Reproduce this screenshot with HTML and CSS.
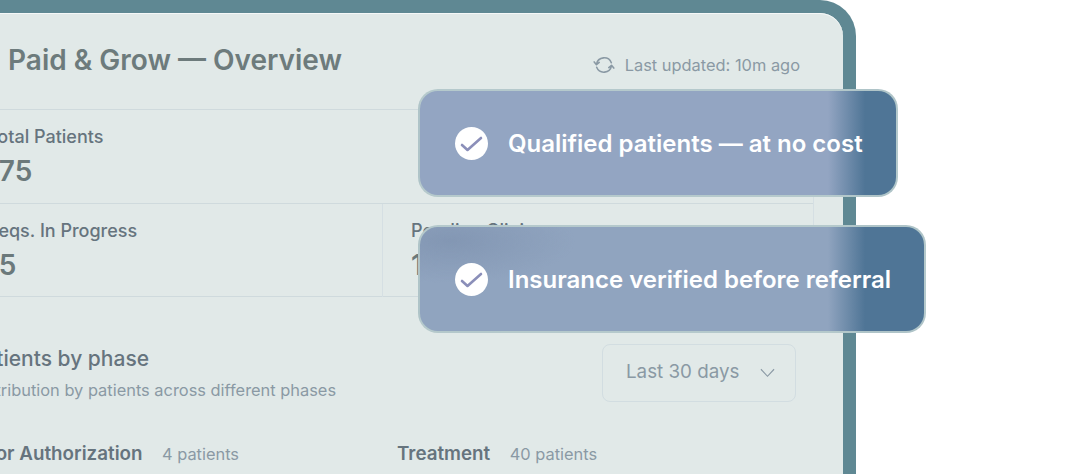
FILE: index.html
```html
<!DOCTYPE html>
<html lang="en">
<head>
    <meta charset="UTF-8">
    <meta name="viewport" content="width=device-width, initial-scale=1.0">
    <title>Paid &amp; Grow</title>
    <link rel="stylesheet" href="styles.css">
</head>
<body>
  <div class="frame">
    <div class="panel">
      <div class="header">
        <h1>Paid &amp; Grow — Overview</h1>
        <div class="updated">
          <svg class="refresh-icon" viewBox="0 0 24 24">
            <path d="M20 9.5A8.5 8.5 0 0 0 3.8 11M1.3 8.6l2.5 3 3-2.4"/>
            <path d="M4 14.5A8.5 8.5 0 0 0 20.2 13M22.7 15.4l-2.5-3-3 2.4"/>
          </svg>
          Last updated: 10m ago
        </div>
      </div>
      <div class="stats">
        <div class="stat stat-wide">
          <div class="stat-label">Total Patients</div>
          <div class="stat-value">175</div>
        </div>
        <div class="stat stat-left">
          <div class="stat-label">Reqs. In Progress</div>
          <div class="stat-value">15</div>
        </div>
        <div class="stat stat-right">
          <div class="stat-label">Pending Clinic</div>
          <div class="stat-value">1</div>
        </div>
      </div>
      <div class="phases">
        <div class="phases-text">
          <h2>Patients by phase</h2>
          <p>Distribution by patients across different phases</p>
        </div>
        <div class="select">
          <span class="select-text">Last 30 days</span>
          <svg class="chevron" viewBox="0 0 16 10"><path d="M1 1l7 7.5L15 1"/></svg>
        </div>
      </div>
      <div class="phase-list">
        <div class="phase"><strong>Prior Authorization</strong><span>4 patients</span></div>
        <div class="phase"><strong>Treatment</strong><span>40 patients</span></div>
      </div>
    </div>
  </div>

  <div class="callouts">
    <div class="callout">
      <svg class="check" viewBox="0 0 33 33"><circle cx="16.5" cy="16.5" r="16.5"/><path d="M7 18l5.5 5L26 11"/></svg>
      Qualified patients — at no cost
    </div>
    <div class="callout callout-smudged">
      <svg class="check" viewBox="0 0 33 33"><circle cx="16.5" cy="16.5" r="16.5"/><path d="M7 18l5.5 5L26 11"/></svg>
      Insurance verified before referral
    </div>
  </div>
</body>
</html>
```

FILE: styles.css
```css
html, body {
    height: 100%;
    overflow: hidden;
}
body {
    font-family: Inter, "Liberation Sans", sans-serif;
    background-color: white;
    margin: 0;
    padding: 0;
    color: #67757c;
}
.frame {
    width: 890px;
    height: 474px;
    margin-left: -34px;
    padding: 13px 13px 0;
    box-sizing: border-box;
    background-color: #5f8893;
    border-radius: 36px 36px 0 0;
}
.panel {
    height: 100%;
    background-color: #e1e9e8;
    border-radius: 23px 23px 0 0;
    box-shadow: inset 0 1px 0 #f5f8f8;
}
.header {
    height: 96px;
    display: flex;
    justify-content: space-between;
    align-items: center;
    box-sizing: border-box;
}
h1 {
    font-size: 28px;
    font-weight: 600;
    margin: 0 0 3px 29px;
    color: #6d7b7c;
    white-space: nowrap;
}
.updated {
    display: flex;
    align-items: center;
    gap: 10px;
    margin: 8px 43px 0 0;
    font-size: 16.4px;
    color: #8a99a4;
}
.refresh-icon {
    width: 22px;
    height: 22px;
    fill: none;
    stroke: #8a99a4;
    stroke-width: 1.7;
    stroke-linecap: round;
    stroke-linejoin: round;
}
.stats {
    width: 853px;
    margin-left: -18px;
    box-sizing: border-box;
    display: grid;
    grid-template-columns: 422px 1fr;
    grid-template-rows: 94px 93px;
    border-top: 1px solid #cfdadd;
    border-bottom: 1px solid #cfdadd;
    border-right: 1px solid #d5dfe3;
    height: 188px;
}
.stat {
    padding: 15px 29px 0 26px;
}
.stat-wide {
    grid-column: 1 / 3;
    border-bottom: 1px solid #cfdadd;
}
.stat-left {
    border-right: 1px solid #d5dfe3;
}
.stat-right {
    padding-left: 28px;
}
.stat-label {
    font-size: 18px;
    font-weight: 500;
    line-height: 24px;
    color: #66747e;
}
.stat-value {
    font-size: 28px;
    font-weight: 600;
    line-height: 36px;
    margin-top: 4px;
    color: #6b797b;
}
.phases {
    display: flex;
    justify-content: space-between;
    align-items: flex-start;
    width: 825px;
    margin: 47px 0 0 -8px;
}
h2 {
    font-size: 21px;
    font-weight: 500;
    line-height: 28px;
    margin: 1px 0 -1px;
    color: #66747e;
}
.phases-text p {
    font-size: 16.4px;
    line-height: 22px;
    margin: 7px 0 0;
    color: #8a99a4;
}
.select {
    width: 194px;
    height: 58px;
    box-sizing: border-box;
    padding: 0 20px 0 23px;
    display: flex;
    justify-content: space-between;
    align-items: center;
    font-size: 18.8px;
    color: #8a99a4;
    border: 1px solid #d2dde1;
    border-radius: 8px;
}
.select-text {
    margin-bottom: 3px;
}
.chevron {
    width: 15px;
    height: 10px;
    fill: none;
    stroke: #8a99a4;
    stroke-width: 1.2;
}
.phase-list {
    display: grid;
    grid-template-columns: 426px 1fr;
    margin: 40px 0 0 -8px;
}
.phase {
    display: flex;
    align-items: baseline;
    gap: 19.5px;
    white-space: nowrap;
}
.phase strong {
    font-size: 18.8px;
    font-weight: 600;
    color: #66747e;
}
.phase span {
    font-size: 16.4px;
    color: #8a99a4;
}
/* these sit over the dashboard */
.callouts {
    position: absolute;
    left: 418px;
    top: 89px;
    display: flex;
    flex-direction: column;
    align-items: flex-start;
    gap: 28px;
}
.callout {
    height: 108px;
    box-sizing: border-box;
    padding: 0 33px 0 35px;
    display: flex;
    align-items: center;
    gap: 20px;
    font-size: 24px;
    font-weight: 600;
    color: white;
    white-space: nowrap;
    border: 2px solid rgba(185, 205, 205, 0.9);
    border-radius: 20px;
    background: linear-gradient(90deg, rgb(147, 165, 194) 408px, rgb(79, 117, 150) 445px);
}
.callout-smudged {
    background:
        radial-gradient(ellipse 125px 42px at 30px 14px, rgba(120, 140, 170, 0.55), rgba(120, 140, 170, 0)),
        linear-gradient(90deg, rgb(144, 164, 191) 408px, rgb(79, 117, 150) 445px);
}
.check {
    width: 33px;
    height: 33px;
    flex: none;
}
.check circle {
    fill: white;
}
.check path {
    fill: none;
    stroke: #8b8fb9;
    stroke-width: 2.6;
    stroke-linecap: round;
    stroke-linejoin: round;
}
```
